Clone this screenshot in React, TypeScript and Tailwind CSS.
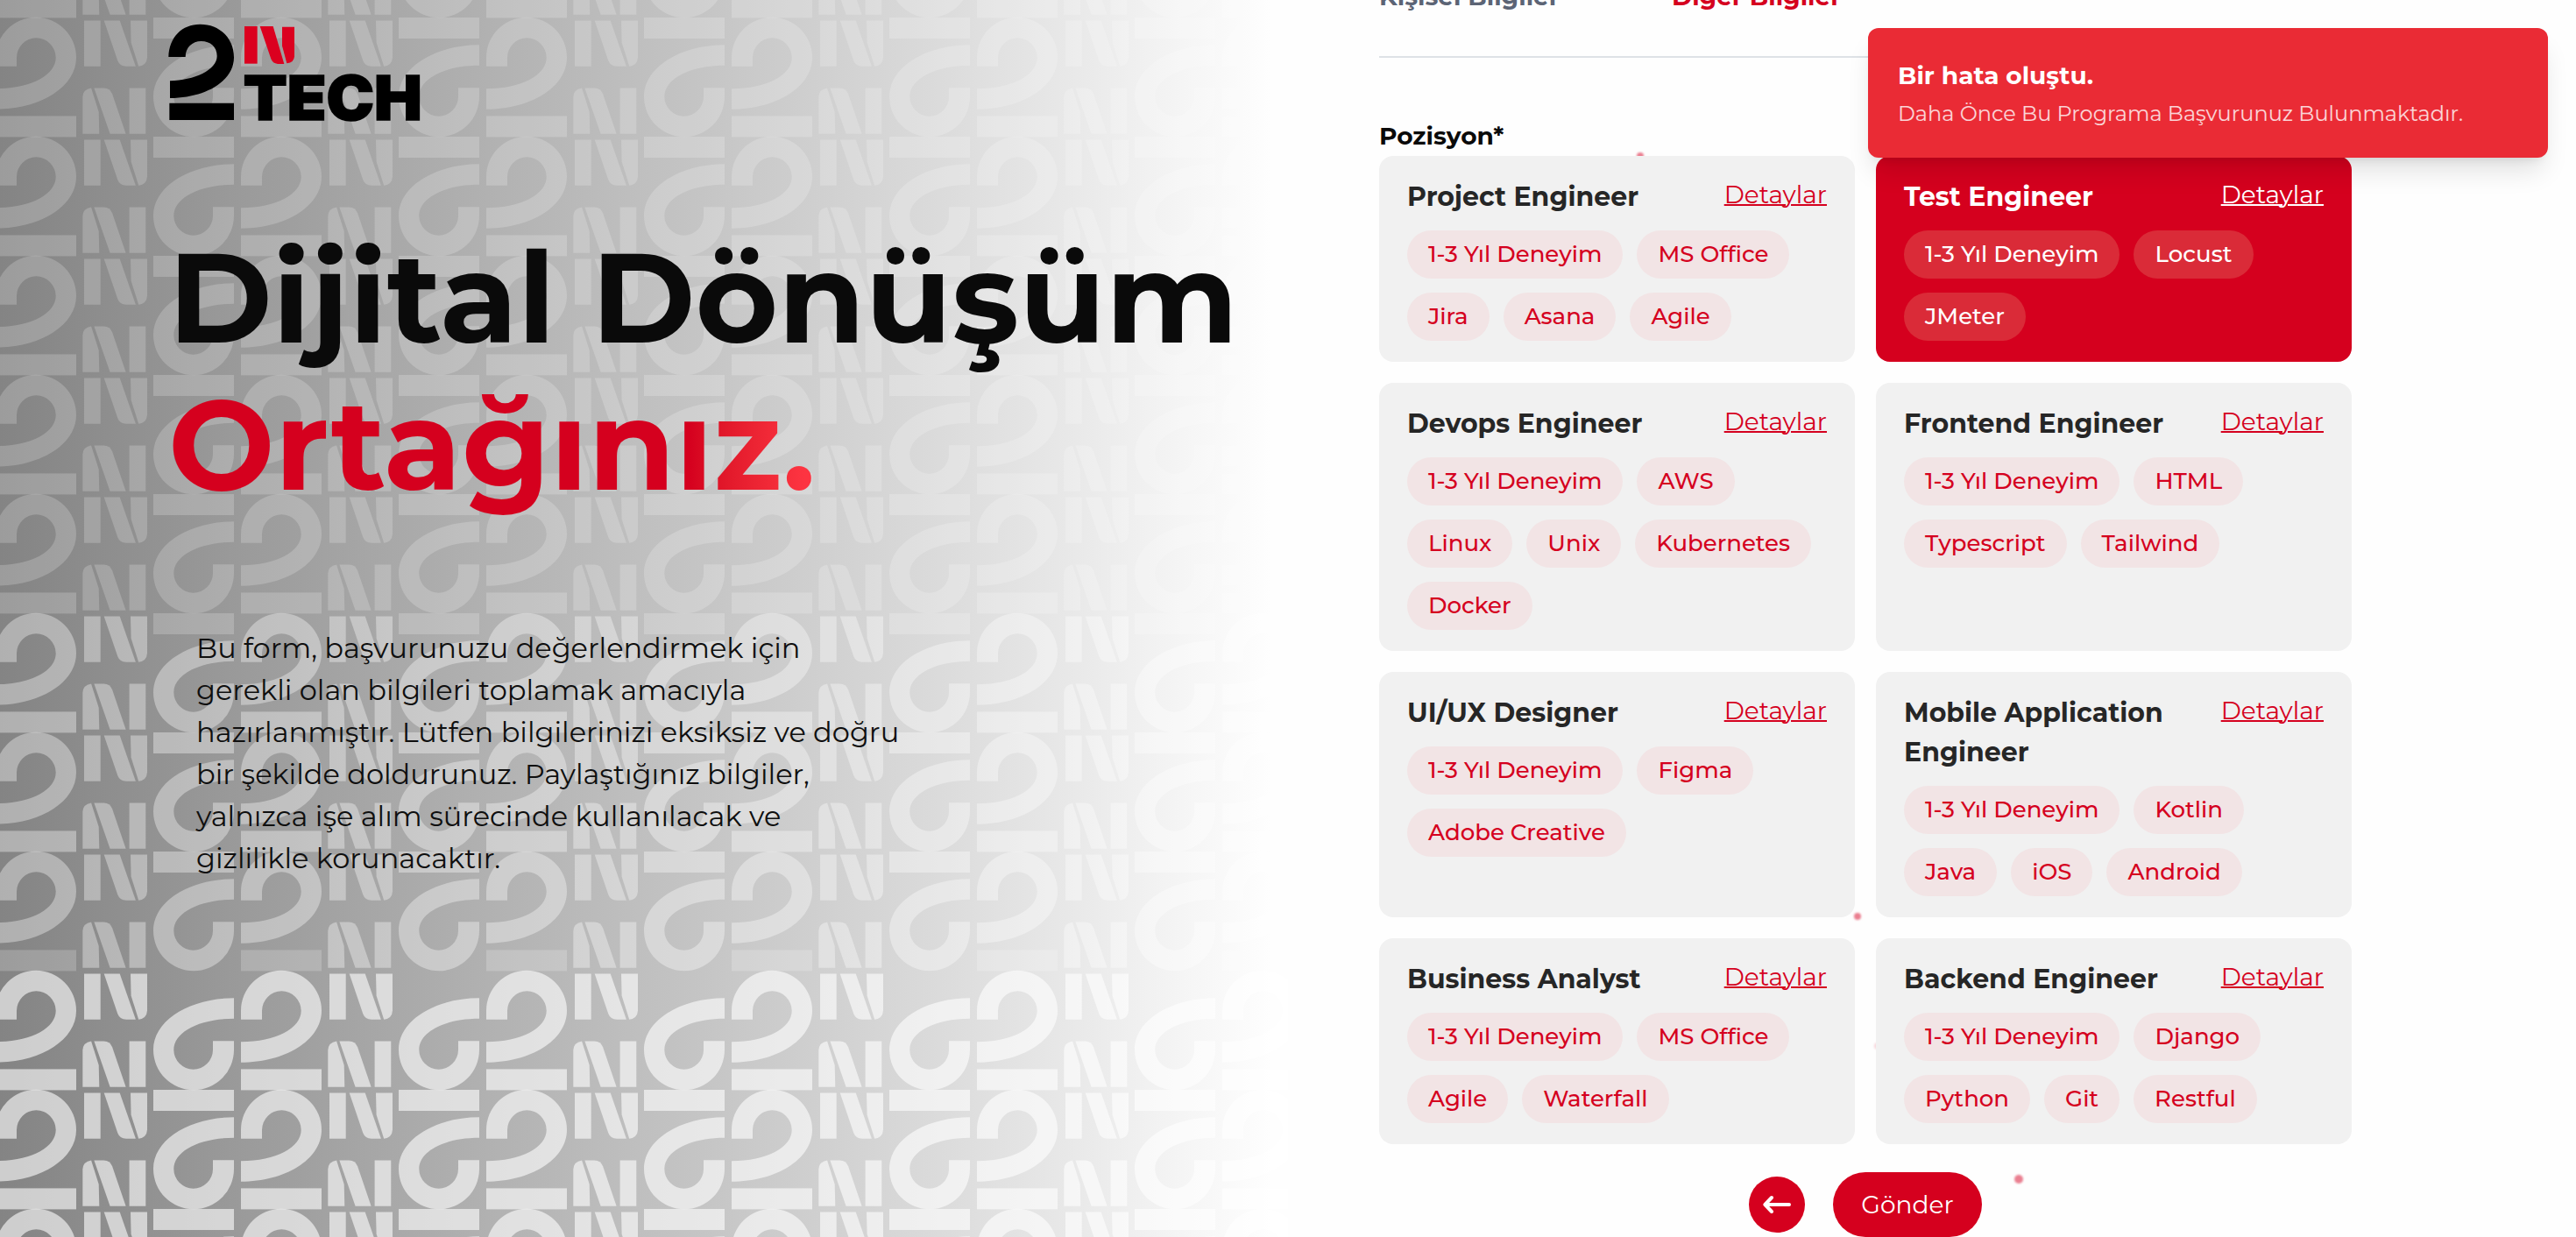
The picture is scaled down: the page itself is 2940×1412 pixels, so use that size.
import type { ReactNode } from "react";

type Position = { title: string; tags: string[]; selected?: boolean };

const EXPERIENCE = "1-3 Yıl Deneyim";

const POSITIONS: Position[] = [
  { title: "Project Engineer", tags: [EXPERIENCE, "MS Office", "Jira", "Asana", "Agile"] },
  { title: "Test Engineer", tags: [EXPERIENCE, "Locust", "JMeter"], selected: true },
  { title: "Devops Engineer", tags: [EXPERIENCE, "AWS", "Linux", "Unix", "Kubernetes", "Docker"] },
  { title: "Frontend Engineer", tags: [EXPERIENCE, "HTML", "Typescript", "Tailwind"] },
  { title: "UI/UX Designer", tags: [EXPERIENCE, "Figma", "Adobe Creative"] },
  { title: "Mobile Application Engineer", tags: [EXPERIENCE, "Kotlin", "Java", "iOS", "Android"] },
  { title: "Business Analyst", tags: [EXPERIENCE, "MS Office", "Agile", "Waterfall"] },
  { title: "Backend Engineer", tags: [EXPERIENCE, "Django", "Python", "Git", "Restful"] },
];

function Card({ title, tags, selected }: Position) {
  return (
    <div className={`relative rounded-2xl px-8 py-6 ${selected ? "bg-[#d5001e] text-white" : "bg-[#f1f1f1] text-[#d5001e]"}`}>
      <div className="flex items-start justify-between">
        <h3 className={`w-[320px] text-[30px] leading-[45px] font-bold ${selected ? "text-white" : "text-[#262626]"}`}>
          {title}
        </h3>
        <a className="h-[42px] text-[28px] leading-[40px] font-normal underline decoration-2">Detaylar</a>
      </div>
      <div className="mt-4 flex flex-wrap gap-4">
        {tags.map((text) => (
          <span
            key={text}
            className={`flex h-[55px] items-center rounded-full px-6 text-[26px] leading-[39px] font-medium whitespace-nowrap ${selected ? "bg-[#da2b38]" : "bg-[#f2e4e5]"}`}
          >
            {text}
          </span>
        ))}
      </div>
    </div>
  );
}

const ARC = "M0 56V46A46 46 0 0 1 92 46C92 80 50 105 0 105V81.5C40 81.5 68.7 66 68.7 46A22.3 22.3 0 0 0 24 46V56Z";

function PatternBackdrop() {
  const rows = [-1, 0, 1, 2, 3, 4, 5, 6, 7, 8, 9, 10];
  const cols = [-1, 0, 1, 2, 3, 4, 5];
  const alpha = (row: number) => (row < 5 ? 0.2 : row < 8 ? 0.36 : 0.6);
  const topBar = (row: number) => (row === 5 ? 0.2 : row === 8 ? 0 : alpha(row));
  const bottomBar = (row: number) => (row === 7 ? 0.2 : alpha(row));
  return (
    <svg className="absolute inset-0" width="1470" height="1412" viewBox="0 0 1470 1412">
      <defs>
        <path id="arc" d={ARC} />
        <g id="en">
          <path d="M0 0H18.7V52.3H0Z" />
          <path d="M22.7 0H40.7L58.9 52.3H48Q40.5 52 38.2 45.5Z" />
          <path d="M53 0H72V42Q71.5 51 62.2 52.3L53.6 25Z" />
        </g>
      </defs>
      {rows.map((r) =>
        cols.map((c) => (
          <g key={`${r}:${c}`} transform={`translate(${c * 280} ${20 + r * 136})`} fill="#fff">
            <g fillOpacity={alpha(r)}>
              <use href="#en" x="96" y="3.4" />
              <use href="#en" transform="translate(166.3 132.8) rotate(180)" />
              <use href="#arc" transform="translate(267 136.3) rotate(180)" />
              <use href="#arc" x="275" y="-0.3" />
            </g>
            <rect x="175" y="0" width="92" height="24" fillOpacity={topBar(r)} />
            <rect x="275" y="112.4" width="92" height="24" fillOpacity={bottomBar(r)} />
          </g>
        )),
      )}
    </svg>
  );
}

function Logo() {
  return (
    <svg width="310" height="135" viewBox="0 0 930 405">
      <path d="M22 150C24 82 68 38 130 38C200 38 246 88 246 152C246 232 150 290 27 291V232C110 230 188 195 188 147C188 115 165 96 134 96C103 96 80 118 80 150Z" />
      <path d="M25 308H246V366H25Z" />
      <g fill="#db001f">
        <path d="M282 45H326V173H282Z" />
        <path d="M335 45H380L418 174H396Q378 172 373 157Z" />
        <path d="M411 47H453V148Q452 170 427 172L411 112Z" />
      </g>
      <text
        x="278"
        y="366"
        fontFamily="Inter"
        fontWeight="900"
        fontSize="210"
        textLength="612"
        lengthAdjust="spacingAndGlyphs"
        stroke="#000"
        strokeWidth="5"
      >
        TECH
      </text>
    </svg>
  );
}

function Dot({ className }: { className: string }) {
  return <span className={`absolute rounded-full bg-[#ea7f90] blur-[1px] ${className}`} />;
}

const INTRO = [
  "Bu form, başvurunuzu değerlendirmek için",
  "gerekli olan bilgileri toplamak amacıyla",
  "hazırlanmıştır. Lütfen bilgilerinizi eksiksiz ve doğru",
  "bir şekilde doldurunuz. Paylaştığınız bilgiler,",
  "yalnızca işe alım sürecinde kullanılacak ve",
  "gizlilikle korunacaktır.",
];

function Tab({ children, active }: { children: ReactNode; active?: boolean }) {
  return (
    <span className={`w-[334px] text-[28px] leading-[42px] font-bold ${active ? "text-[#d5001e]" : "text-[#5c6475]"}`}>
      {children}
    </span>
  );
}

export default function App() {
  return (
    <div className="relative flex h-[1412px] w-[2940px] overflow-hidden bg-[#fefefe] font-['Montserrat','Inter',sans-serif]">
      <section className="relative h-[1412px] w-[1470px] shrink-0 bg-[linear-gradient(90deg,#848484_0px,#d9d9d9_1050px,#ebebeb_1250px,#f5f5f5_1350px,#fefefe_1450px)]">
        <PatternBackdrop />
        <div className="relative pt-[15px]">
          <div className="h-[135px] pl-[185px]">
            <Logo />
          </div>
          <h1 className="mt-[106px] flex flex-col items-start pl-[192px] text-[144px] leading-[168px] font-bold whitespace-nowrap text-[#0a0a0a]">
            <span>Dijital Dönüşüm</span>
            <span className="bg-linear-to-r from-[#d5001e] from-[594px] to-[#fd3441] to-[725px] bg-clip-text text-transparent">
              Ortağınız.
            </span>
          </h1>
          <p className="mt-[124px] flex flex-col items-start pl-[224px] text-[32px] leading-[48px] whitespace-nowrap text-[#0f0f0f]">
            {INTRO.map((line) => (
              <span key={line}>{line}</span>
            ))}
          </p>
        </div>
      </section>

      <section className="relative flex-1 pl-[104px]">
        <Dot className="top-[174px] left-[398px] size-2" />
        <Dot className="top-[1042px] left-[646px] size-2" />
        <Dot className="top-[1341px] left-[829px] size-[10px]" />
        <Dot className="top-[1190px] left-[669px] size-2 opacity-30" />
        <div className="w-[1110px]">
          <nav className="-mt-[25px] flex border-b-2 border-[#dee2e6] pb-[47px]">
            <Tab>Kişisel Bilgiler</Tab>
            <Tab active>Diğer Bilgiler</Tab>
          </nav>
          <label className="mt-[68px] mb-[2px] block text-[28px] leading-[42px] font-bold text-[#0a0a0a]">
            Pozisyon*
          </label>
          <div className="grid grid-cols-2 gap-6">
            {POSITIONS.map((p) => (
              <Card key={p.title} {...p} />
            ))}
          </div>
          <div className="mt-8 flex items-center justify-center gap-8">
            <button className="flex size-16 items-center justify-center rounded-full bg-[#d5001e]">
              <svg width="32" height="32" viewBox="0 0 32 32" fill="none" stroke="#fff" strokeWidth="4" strokeLinecap="round" strokeLinejoin="round">
                <path d="M30 16H3M10 8L2.4 16L10 24" />
              </svg>
            </button>
            <button className="h-[74px] w-[170px] rounded-full bg-[#d5001e] text-[28px] leading-[42px] font-normal text-white">
              Gönder
            </button>
          </div>
        </div>
      </section>

      <div className="absolute top-8 left-[2132px] h-[148px] w-[776px] rounded-xl bg-[#ea2b35] px-[34px] pt-[33px] whitespace-nowrap shadow-[0_20px_30px_-6px_rgba(0,0,0,0.12),0_8px_12px_-8px_rgba(0,0,0,0.12)]">
        <div className="text-[28px] leading-[42px] font-bold text-white">Bir hata oluştu.</div>
        <div className="mt-[3px] text-[24px] leading-[39px] font-normal text-white/80">
          Daha Önce Bu Programa Başvurunuz Bulunmaktadır.
        </div>
      </div>
    </div>
  );
}
